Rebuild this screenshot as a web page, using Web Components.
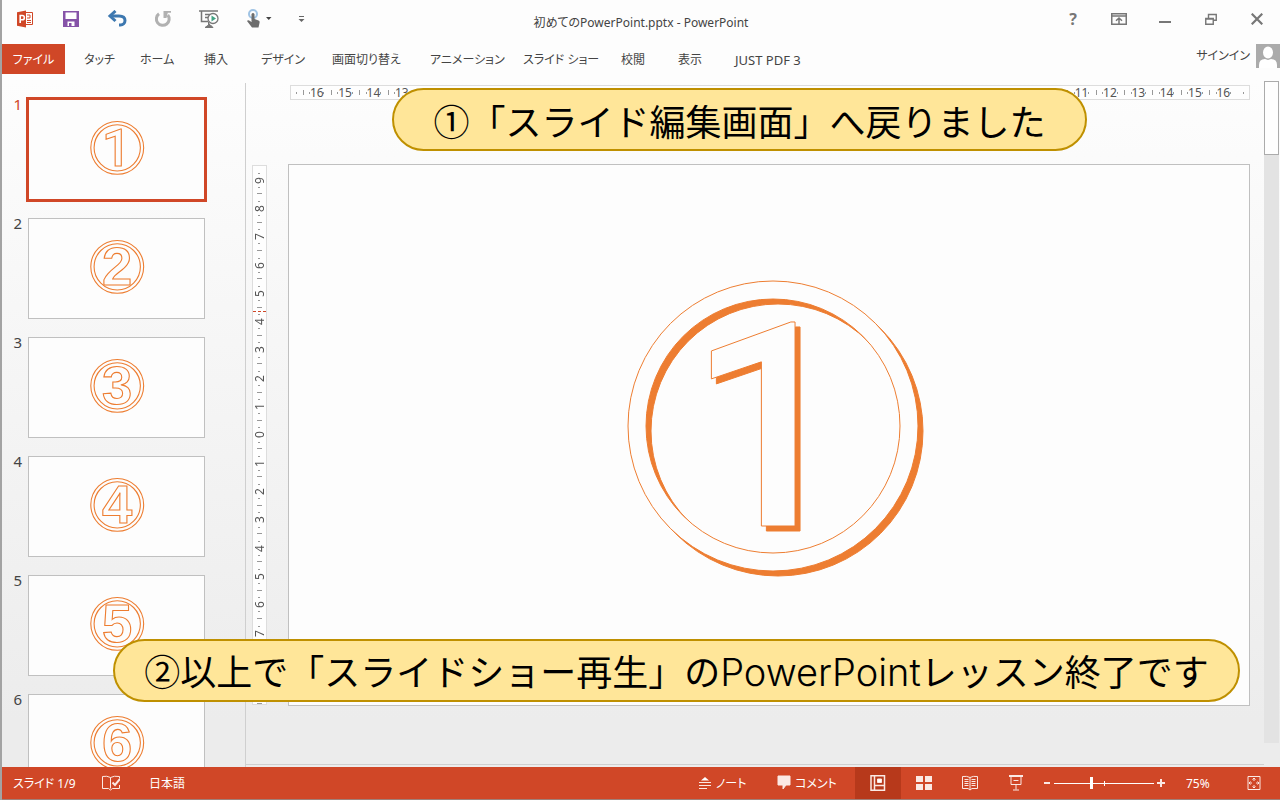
<!DOCTYPE html>
<html lang="ja">
<head>
<meta charset="utf-8">
<title>初めてのPowerPoint.pptx - PowerPoint</title>
<style>
html, body { margin: 0; height: 100%; }
body { font-family: "Noto Sans", "Noto Sans CJK JP", sans-serif; font-size: 12px; color: #444; }
</style>
</head>
<body>
<ppt-app></ppt-app>

<script>
const define = (name, html, setup) => {
  const tpl = document.createElement('template');
  tpl.innerHTML = html;
  customElements.define(name, class extends HTMLElement {
    static observedAttributes = ['figure'];
    constructor() {
      super();
      this.attachShadow({ mode: 'open' }).append(tpl.content.cloneNode(true));
    }
    connectedCallback() { if (setup) setup(this, this.shadowRoot); }
    attributeChangedCallback() { if (setup && this.isConnected) setup(this, this.shadowRoot); }
  });
};

/* Quick access toolbar, document title and window buttons */
define('title-bar', `
<style>
:host { display: grid; grid-template-columns: 1fr auto 1fr; height: 44px; }
.group { display: flex; height: 38px; }
.right { justify-content: flex-end; }
button { all: unset; width: 46px; display: flex; align-items: center; justify-content: center; }
.touch { width: 54px; }
.more { width: 30px; }
h1 { margin: 0; font-size: 12px; font-weight: 400; line-height: 46px; white-space: nowrap; font-feature-settings: "palt"; }
svg { display: block; }
.help { font: bold 16px/38px "Noto Sans", sans-serif; color: #777; }
</style>
<div class="group">
  <button aria-label="PowerPoint"><svg width="18" height="18" viewBox="0 0 18 18"><path d="M9 2.500h7.500v12H9" fill="#fff" stroke="#d04727"/><path d="M11 5h3v3h-3M11 10.500h4M11 12.500h4" fill="none" stroke="#d04727"/><path d="M1 2.200 10 .6v16.800L1 15.800z" fill="#d04727"/><path d="M4.200 13V5.500h2a2 2 0 0 1 0 4.300h-2" fill="none" stroke="#fff" stroke-width="1.600"/></svg></button>
  <button aria-label="保存"><svg width="16" height="16" viewBox="0 0 16 16"><path d="M0 0h16v16H0z" fill="#8653a8"/><path d="M2.500 1.500h11V8h-11zM4.500 10.500h7V15h-7z" fill="#fff"/><path d="M6 12h2.500v3H6z" fill="#8653a8"/></svg></button>
  <button aria-label="元に戻す"><svg width="20" height="18" viewBox="0 0 20 18"><path d="M3 6h9c4 0 6 2 6 4.600s-2 4.400-4.500 4.400H12" fill="none" stroke="#3d78b0" stroke-width="3"/><path d="M8.500 1 3 6l5.500 5" fill="none" stroke="#3d78b0" stroke-width="3"/></svg></button>
  <button aria-label="繰り返し"><svg width="18" height="18" viewBox="0 0 18 18"><path d="M5 3.800A6.400 6.400 0 1 0 13.800 5" fill="none" stroke="#b1b1b1" stroke-width="3"/><path d="M9.500 1H17v1.800h-3.200L12.500 8H9.500z" fill="#b1b1b1"/></svg></button>
  <button aria-label="スライド ショーの開始"><svg width="20" height="20" viewBox="0 0 20 20"><path d="M0 2h19M2.500 2v10.500H9M6 5.500h5M6 8.500h3" fill="none" stroke="#777" stroke-width="1.500"/><path d="M9.500 13v3L6 18.500h8L11.500 16" fill="#777" stroke="#777"/><circle cx="14" cy="9.500" r="5" fill="#fff" stroke="#777" stroke-width="1.300"/><path d="M12.500 6.500v6l4.500-3z" fill="#43a384"/></svg></button>
  <button class="touch" aria-label="タッチ/マウス モード"><svg width="30" height="20" viewBox="0 0 30 20"><circle cx="9" cy="5" r="4" fill="none" stroke="#9fc3e4" stroke-width="2"/><path d="M7.500 5q1.500-2 3 0v5l4 1.500q1.500.5 1 2.500l-1 4.500H8L3 12q1-1.500 3 0l1.500 1z" fill="#6d6d6d"/><path d="M22 8h5.500l-2.750 3z" fill="#444"/></svg></button>
  <button class="more" aria-label="カスタマイズ"><svg width="7" height="8" viewBox="0 0 7 8"><path d="M1 1.500h5" stroke="#666"/><path d="M.5 4h6l-3 3z" fill="#666"/></svg></button>
</div>
<h1>初めてのPowerPoint.pptx - PowerPoint</h1>
<div class="group right">
  <button class="help">?</button>
  <button aria-label="リボンの表示オプション"><svg width="16" height="12" viewBox="0 0 16 12"><path d="M.75.750h14.500v10.500H.75zM1 3h14M8 11V5M5 7.800 8 5l3 2.800" fill="none" stroke="#777" stroke-width="1.500"/></svg></button>
  <button aria-label="最小化"><svg width="12" height="8" viewBox="0 0 12 8"><path d="M0 6h12v2H0z" fill="#777"/></svg></button>
  <button aria-label="元に戻す (縮小)"><svg width="12" height="12" viewBox="0 0 12 12"><path d="M.75 5.500h7.500v5.750H.75zM3.500 5V1.500h7.750v5.750H8.500M.5 6h8M3.500 1.500h8" fill="none" stroke="#777" stroke-width="1.400"/></svg></button>
  <button aria-label="閉じる"><svg width="12" height="12" viewBox="0 0 12 12"><path d="M.7.700l10.600 10.600M11.300.700.7 11.300" stroke="#777" stroke-width="2.200"/></svg></button>
</div>`);

define('ribbon-tabs', `
<style>
:host { display: flex; justify-content: space-between; height: 30px; }
nav { display: grid; grid-template-columns: 82px 56px 64px 57px 71px 98px 93px 98px 57px 57px auto; }
a { color: #444; text-decoration: none; height: 30px; line-height: 32px; white-space: nowrap; font-feature-settings: "palt"; }
.file { width: 63px; text-align: center; background: #d04727; color: #fff; }
.latin { font-size: 13px; }
.account { display: flex; gap: 6px; }
.account a { line-height: 24px; }
svg { display: block; }
</style>
<nav>
<a class="file" href="#file">ファイル</a><a href="#touch">タッチ</a><a href="#home">ホーム</a><a href="#insert">挿入</a><a href="#design">デザイン</a><a href="#transitions">画面切り替え</a><a href="#animations">アニメーション</a><a href="#show">スライド ショー</a><a href="#review">校閲</a><a href="#view">表示</a><a class="latin" href="#pdf">JUST PDF 3</a>
</nav>
<div class="account"><a href="#signin">サインイン</a>
<svg width="24" height="24" viewBox="0 0 24 24"><path d="M0 0h24v24H0z" fill="#ababab"/><path d="M3 24v-3q0-6 6-6l3 1 3-1q6 0 6 6v3z" fill="#fff"/><ellipse cx="12" cy="8.500" rx="5" ry="6" fill="#fff"/></svg></div>`);

/* A slide holding a circled figure; "raised" adds the hard drop shadow */
define('slide-art', `
<style>
:host { display: block; background: #fdfdfd; border: 1px solid #c0c0c0; aspect-ratio: 16 / 9; }
svg { display: block; width: 100%; height: 100%; }
.ring, text { fill: #fdfdfd; stroke: #ed7d31; stroke-width: 6px; }
text { font: 700 298px "Liberation Sans", sans-serif; text-anchor: middle; }
:host([figure="1"]) text { font: 500 286px Roboto, sans-serif; }
:host([raised]) .ring, :host([raised]) text { stroke-width: 1px; filter: drop-shadow(5px 5px 0 #ed7d31); }
</style>
<svg viewBox="0 0 960 540">
<path class="ring" fill-rule="evenodd" d="M339 261a145 145 0 1 1 290 0a145 145 0 1 1-290 0zM357 261a127 127 0 1 1 254 0a127 127 0 1 1-254 0z"/>
<text y="361"></text>
</svg>`, (el, root) => {
  const figure = el.getAttribute('figure');
  const text = root.querySelector('text');
  text.textContent = figure;
  text.setAttribute('x', figure === '1' ? 480 : 484);
});

define('slide-thumb', `
<style>
:host { display: grid; grid-template-columns: 26px 177px; height: 101px; margin-bottom: 18px; font-size: 15px; line-height: 10px; }
span { text-align: right; padding-right: 6px; }
slide-art { box-sizing: border-box; height: 101px; aspect-ratio: auto; }
:host([selected]) span { color: #d04727; }
:host([selected]) slide-art { border: 3px solid #d04727; margin: -2px; height: 105px; }
</style>
<span></span><slide-art></slide-art>`, (el, root) => {
  const n = el.getAttribute('number');
  root.querySelector('span').textContent = n;
  root.querySelector('slide-art').setAttribute('figure', n);
});

/* Centimetre ruler: "reach" is the highest figure on both sides of zero, "units" the full length,
   "blank" the first and last place that stay without a figure */
define('slide-ruler', `
<style>
:host { display: flex; box-sizing: border-box; height: 15px; border: 1px solid #ddd; background: #fefefe; color: #555; font-size: 12px; line-height: 13px; overflow: hidden; }
:host([vertical]) { writing-mode: vertical-rl; transform: rotate(180deg); width: 15px; height: auto; }
.end { flex: 1; background: linear-gradient(#999, #999) center / 1px 2px no-repeat; }
.unit { flex: none; inline-size: var(--unit); text-align: center; white-space: nowrap;
  background: linear-gradient(#999, #999) 0 50% / 1px 5px no-repeat, linear-gradient(#999, #999) 24% 50% / 1px 2px no-repeat, linear-gradient(#999, #999) 76% 50% / 1px 2px no-repeat; }
:host([vertical]) .end { background-size: 2px 1px; }
:host([vertical]) .unit { background-position: 50% 0, 50% 24%, 50% 76%; background-size: 5px 1px, 2px 1px, 2px 1px; }
</style>`, (el, root) => {
  const reach = +el.getAttribute('reach');
  const [from, to] = el.getAttribute('blank').split(' ').map(Number);
  el.style.setProperty('--unit', `calc(100% / ${el.getAttribute('units')})`);
  const add = (cls, text) => {
    const d = document.createElement('div');
    d.className = cls; d.textContent = text; root.append(d);
  };
  add('end', '');
  for (let i = -reach; i <= reach; i++) add('unit', i >= from && i <= to ? '' : Math.abs(i));
  add('end', '');
});

define('call-out', `
<style>
:host { display: flex; align-items: center; justify-content: center; box-sizing: border-box; height: 63px; border: 2px solid #bf9000; border-radius: 32px; background: #ffe699; color: #000; font: 400 36px/56px "Noto Sans CJK JP", sans-serif; white-space: nowrap; }
::slotted(span) { font-family: Inter, sans-serif; font-weight: 300; font-size: 38px; }
</style>
<div><slot></slot></div>`);

define('status-bar', `
<style>
:host { display: flex; align-items: stretch; justify-content: space-between; height: 32px; background: #d04727; color: #fff; border-bottom: 1px solid #a08078; font-feature-settings: "palt"; }
div { display: flex; align-items: center; }
.left { padding-left: 11px; }
.left span { width: 89px; }
button { all: unset; display: flex; align-items: center; gap: 4px; height: 32px; white-space: nowrap; }
.lang { margin-left: 29px; }
.notes { width: 79px; } .comments { width: 78px; }
.view { width: 46px; justify-content: center; }
.on { background: #b7391b; }
.step { width: 8px; justify-content: center; }
.minus { margin-left: 4px; }
.zoom { position: relative; width: 100px; height: 32px; margin: 0 3px; }
.zoom::after { content: ""; position: absolute; left: 50%; top: 14px; width: 1px; height: 5px; background: #fff; }
input { appearance: none; width: 100%; height: 32px; margin: 0; background: linear-gradient(#fff, #fff) center / 100% 1px no-repeat; }
input::-webkit-slider-thumb { appearance: none; width: 3px; height: 12px; background: #fff; }
.pct { width: 42px; margin-left: 21px; }
.fit { width: 52px; justify-content: center; }
svg { display: block; fill: none; stroke: #fbe9e4; }
</style>
<div class="left">
  <span>スライド 1/9</span>
  <button aria-label="スペル チェック"><svg width="18" height="16" viewBox="0 0 18 16"><path d="M8.500 13.500V2.500Q5 .5.500 1.500v12h6l2 1.500 2-1.500h7V10M8.500 2.500Q12 .5 17.500 1.500v2"/><path d="m10.500 7.500 2.500 2.500 5-6" stroke-width="2"/></svg></button>
  <button class="lang">日本語</button>
</div>
<div>
  <button class="notes"><svg width="14" height="14" viewBox="0 0 14 14"><path d="M1 6.500h12M1 9.500h12M1 12.500h8"/><path d="M3 4.500h8L7 1z" fill="#fff" stroke="none"/></svg>ノート</button>
  <button class="comments"><svg width="14" height="16" viewBox="0 0 14 16"><path d="M1 1h12v9H9l-3 4v-4H1z" fill="#fbe9e4"/></svg>コメント</button>
  <button class="view on" aria-label="標準"><svg width="16" height="16" viewBox="0 0 16 16"><path d="M1 .750h13.500v14.500H1zM4.500 1v14M4.500 10.500h10" stroke-width="1.500"/><path d="M7.500 4h4v3.500h-4z" fill="#fff"/></svg></button>
  <button class="view" aria-label="スライド一覧"><svg width="16" height="16" viewBox="0 0 16 16"><path d="M0 1h7v6H0zM9 1h7v6H9zM0 9h7v6H0zM9 9h7v6H9z" fill="#fbe9e4" stroke="none"/></svg></button>
  <button class="view" aria-label="閲覧表示"><svg width="18" height="16" viewBox="-1 0 18 16"><path d="M8 2.500Q5 .8.500 1.500v12H6l2 1.500 2-1.500h5.500v-12Q11 .8 8 2.500V15M2.500 4.500h4M2.500 6.500h4M2.500 8.500h4M2.500 10.500h4M9.500 4.500h4M9.500 6.500h4M9.500 8.500h4M9.500 10.500h4"/></svg></button>
  <button class="view" aria-label="スライド ショー"><svg width="16" height="16" viewBox="0 0 16 16"><path d="M1 1h14" stroke-width="2"/><path d="M3 2v7.500h10V2M5.500 5.500h5M8 9.500v5M5 15h6"/></svg></button>
  <button class="step minus" aria-label="縮小"><svg width="6" height="2"><path d="M0 1h6" stroke-width="2"/></svg></button>
  <div class="zoom"><input type="range" min="10" max="185" value="75" aria-label="ズーム"></div>
  <button class="step" aria-label="拡大"><svg width="8" height="8"><path d="M0 4h8M4 0v8" stroke-width="2"/></svg></button>
  <button class="pct">75%</button>
  <button class="fit" aria-label="ウィンドウに合わせる"><svg width="14" height="14" viewBox="0 0 14 14"><path d="M1 .5h12v13H1z"/><path d="M7 2v3M7 9v3M2 7h3M9 7h3M5.500 3.500 7 2l1.500 1.500M5.500 10.500 7 12l1.500-1.500M3.500 5.500 2 7l1.500 1.500M10.500 5.500 12 7l-1.500 1.500"/></svg></button>
</div>`);

define('ppt-app', `
<style>
:host { position: relative; box-sizing: border-box; display: flex; flex-direction: column; height: 100vh; overflow: hidden; border-left: 2px solid #a3a3a3; background: linear-gradient(#fdfdfd 80px, #ececec 720px); }
main { flex: 1; min-height: 0; display: grid; grid-template-columns: 244px 1fr 16px; }
aside { overflow: hidden; margin-top: 9px; border-right: 1px solid #cfcfcf; padding-top: 16px; }
.edit { display: grid; grid-template-columns: 15px 1fr; grid-template-rows: 15px auto; column-gap: 21px; row-gap: 64px; align-content: start; padding: 11px 14px 0 6px; border-bottom: 1px solid #cfcfcf; margin-bottom: 2px; }
.edit .across { grid-column: 2; margin: 0 0 0 2px; }
.down { margin: 1px 0; }
.scroll { margin: 7px 1px 24px 0; background: #e3e3e3; }
.scroll div { box-sizing: border-box; height: 74px; border: 1px solid #ababab; background: #fefefe; }
call-out { position: absolute; }
.first { left: 390px; right: 193px; top: 88px; }
.last { left: 111px; right: 40px; top: 639px; }
.mark { position: absolute; left: 251px; top: 311px; width: 13px; border-top: 1px dashed #d04727; }
</style>
<title-bar></title-bar>
<ribbon-tabs></ribbon-tabs>
<main>
  <aside>
    <slide-thumb number="1" selected></slide-thumb>
    <slide-thumb number="2"></slide-thumb>
    <slide-thumb number="3"></slide-thumb>
    <slide-thumb number="4"></slide-thumb>
    <slide-thumb number="5"></slide-thumb>
    <slide-thumb number="6"></slide-thumb>
  </aside>
  <section class="edit">
    <slide-ruler class="across" reach="16" units="33.8" blank="-12 10"></slide-ruler>
    <slide-ruler class="down" vertical reach="9" units="19" blank="-9 -8"></slide-ruler>
    <slide-art figure="1" raised></slide-art>
  </section>
  <div class="scroll"><div></div></div>
</main>
<status-bar></status-bar>
<div class="mark"></div>
<call-out class="first">①「スライド編集画面」へ戻りました</call-out>
<call-out class="last">②以上で「スライドショー再生」の<span>PowerPoint</span>レッスン終了です</call-out>`);
</script>
</body>
</html>
